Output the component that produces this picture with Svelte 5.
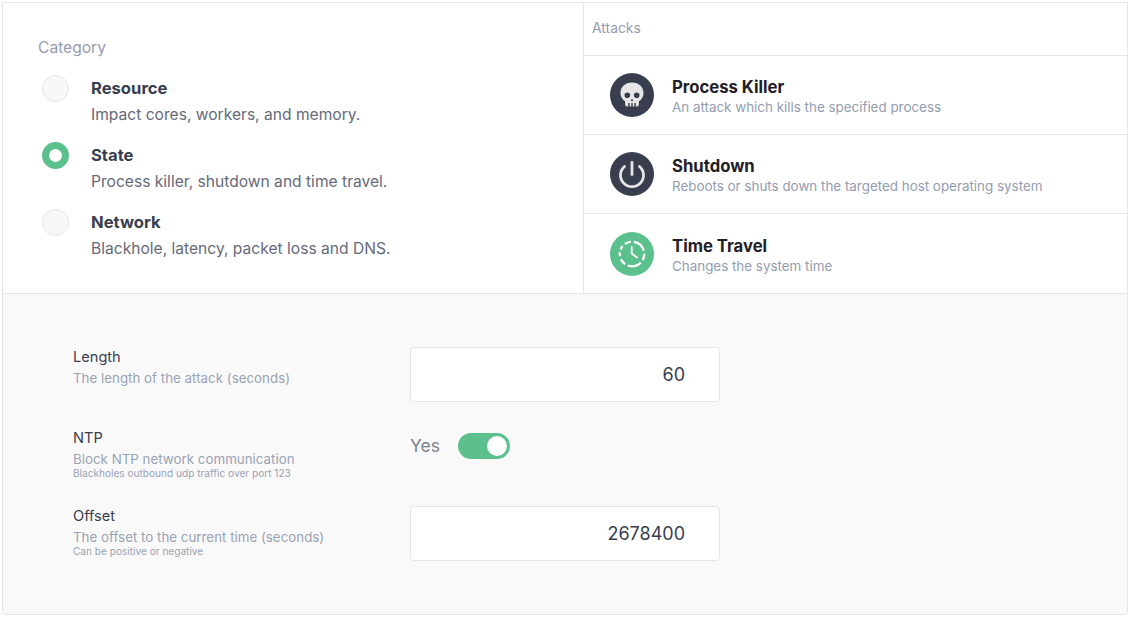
<script>
  const categories = [
    { name: 'Resource', desc: 'Impact cores, workers, and memory.', on: false },
    { name: 'State', desc: 'Process killer, shutdown and time travel.', on: true },
    { name: 'Network', desc: 'Blackhole, latency, packet loss and DNS.', on: false }
  ];
</script>

<div class="page">
  <div class="card">
    <div class="top">
      <section class="left">
        <div class="cat-title">Category</div>
        <div class="cats">
          {#each categories as c}
            <div class="cat">
              <span class="radio" class:on={c.on}></span>
              <div>
                <div class="cat-name">{c.name}</div>
                <div class="cat-desc">{c.desc}</div>
              </div>
            </div>
          {/each}
        </div>
      </section>
      <section class="right">
        <div class="attacks-head">Attacks</div>
        <div class="attack">
          <svg class="ico" viewBox="0 0 44 44">
            <circle cx="22" cy="22" r="22" fill="#393e4f" />
            <path fill="#e6e6e6" fill-rule="evenodd" d="M22 9.500c-6.800 0-11.500 4.500-11.500 10.500 0 3.600 1.700 6.500 4.600 8.200v3.400c0 1 .8 1.900 1.900 1.900h1.200v-3.500h1.400v3.500h1.700v-3.500h1.400v3.500h1.700v-3.500h1.400v3.500h1.200c1.100 0 1.900-.9 1.900-1.900v-3.400c2.900-1.700 4.600-4.600 4.600-8.200C33.500 14 28.800 9.500 22 9.500zM17.300 25a2.800 2.800 0 1 1 0-5.600 2.800 2.800 0 0 1 0 5.600zm9.400 0a2.800 2.800 0 1 1 0-5.600 2.800 2.800 0 0 1 0 5.600zM22 25.500l1.300 2.500h-2.600z" />
          </svg>
          <div class="a-text">
            <div class="a-name">Process Killer</div>
            <div class="a-desc">An attack which kills the specified process</div>
          </div>
        </div>
        <div class="attack">
          <svg class="ico" viewBox="0 0 44 44">
            <circle cx="22" cy="22" r="22" fill="#393e4f" />
            <path fill="none" stroke="#e6e6e6" stroke-width="2.800" stroke-linecap="round" d="M22 10.500v12M14.500 14.500a11.500 11.500 0 1 0 15 0" />
          </svg>
          <div class="a-text">
            <div class="a-name">Shutdown</div>
            <div class="a-desc">Reboots or shuts down the targeted host operating system</div>
          </div>
        </div>
        <div class="attack last">
          <svg class="ico" viewBox="0 0 44 44">
            <circle cx="22" cy="22" r="22" fill="#5cc08d" />
            <circle cx="22" cy="22" r="12.300" fill="none" stroke="#fff" stroke-width="2.200" stroke-dasharray="6.500 3 14 3 6.500 3 4 3 4 3" />
            <path fill="none" stroke="#fff" stroke-width="1.800" stroke-linecap="round" stroke-linejoin="round" d="M21.700 15v6.500l5.300 4" />
          </svg>
          <div class="a-text">
            <div class="a-name">Time Travel</div>
            <div class="a-desc">Changes the system time</div>
          </div>
        </div>
      </section>
    </div>

    <form class="form">
      <div class="row r1">
        <div class="label">
          <div class="l-name">Length</div>
          <div class="l-desc">The length of the attack (seconds)</div>
        </div>
        <div class="input">60</div>
      </div>
      <div class="row r2">
        <div class="label">
          <div class="l-name">NTP</div>
          <div class="l-desc">Block NTP network communication</div>
          <div class="l-help">Blackholes outbound udp traffic over port 123</div>
        </div>
        <div class="switch-wrap">
          <span class="yes">Yes</span>
          <span class="switch"><span class="knob"></span></span>
        </div>
      </div>
      <div class="row r3">
        <div class="label">
          <div class="l-name">Offset</div>
          <div class="l-desc">The offset to the current time (seconds)</div>
          <div class="l-help">Can be positive or negative</div>
        </div>
        <div class="input">2678400</div>
      </div>
    </form>
  </div>
</div>

<style>
  :global(body) {
    margin: 0;
    background: #fff;
    font-family: Inter, "Liberation Sans", sans-serif;
  }
  .page {
    width: 1131px;
    height: 619px;
    padding: 2px 3px 4px 2px;
    box-sizing: border-box;
  }
  .card {
    height: 613px;
    box-sizing: border-box;
    border: 1px solid #e6e6e6;
    border-radius: 0 0 4px 4px;
    display: flex;
    flex-direction: column;
  }
  .top {
    display: flex;
    height: 290px;
    border-bottom: 1px solid #e6e6e6;
    box-sizing: content-box;
  }
  .left {
    width: 580px;
    padding: 36px 0 0 35px;
    box-sizing: border-box;
  }
  .cat-title {
    font-size: 15.600px;
    line-height: 18px;
    color: #939cb0;
  }
  .cats {
    margin-top: 20px;
    display: flex;
    flex-direction: column;
    gap: 13px;
  }
  .cat {
    display: flex;
    height: 54px;
    padding-left: 4px;
  }
  .radio {
    width: 27px;
    height: 27px;
    box-sizing: border-box;
    margin-top: -2px;
    margin-right: 22px;
    border-radius: 50%;
    border: 1px solid #e6e6e6;
    background: #f8f8f8;
    flex: none;
  }
  .radio.on {
    border: 7px solid #5cc08d;
    background: #fff;
  }
  .cat-name {
    font-size: 16.600px;
    font-weight: 700;
    line-height: 22px;
    color: #393e4f;
  }
  .cat-desc {
    margin-top: 5px;
    font-size: 15.600px;
    line-height: 22px;
    color: #666a79;
  }
  .right {
    flex: 1;
    border-left: 1px solid #e6e6e6;
    display: flex;
    flex-direction: column;
  }
  .attacks-head {
    height: 53px;
    box-sizing: border-box;
    padding: 16px 0 0 8px;
    font-size: 13.900px;
    line-height: 18px;
    color: #939cb0;
    border-bottom: 1px solid #e6e6e6;
  }
  .attack {
    height: 79px;
    box-sizing: border-box;
    border-bottom: 1px solid #e6e6e6;
    display: flex;
    align-items: center;
    padding-left: 26px;
    gap: 18px;
  }
  .attack.last {
    border-bottom: 0;
  }
  .ico {
    width: 44px;
    height: 44px;
    flex: none;
  }
  .a-text {
    padding-top: 2px;
  }
  .a-name {
    font-size: 16.700px;
    font-weight: 700;
    line-height: 22px;
    color: #1f2028;
  }
  .a-desc {
    font-size: 13.400px;
    line-height: 18px;
    color: #939cb0;
  }
  .form {
    flex: 1;
    background: #f9f9f9;
    border-radius: 0 0 4px 4px;
    padding: 53px 0 0 70px;
  }
  .row {
    display: flex;
    align-items: flex-start;
  }
  .r1 { height: 81px; }
  .r2 { height: 78px; }
  .label {
    width: 337px;
    flex: none;
  }
  .l-name {
    font-size: 14.600px;
    line-height: 20px;
    color: #393e4f;
  }
  .l-desc {
    margin-top: 2px;
    font-size: 13.350px;
    line-height: 18px;
    color: #9aa3b5;
  }
  .l-help {
    margin-top: -1px;
    font-size: 10.100px;
    line-height: 12px;
    color: #9aa3b5;
  }
  .input {
    width: 310px;
    height: 55px;
    box-sizing: border-box;
    border: 1px solid #e6e6e6;
    border-radius: 4px;
    background: #fff;
    text-align: right;
    padding-right: 34px;
    font-size: 18px;
    line-height: 54px;
    color: #393e4f;
  }
  .switch-wrap {
    display: flex;
    align-items: center;
    gap: 18px;
    height: 26px;
    margin-top: 5px;
  }
  .yes {
    margin-bottom: 2px;
    font-size: 17.500px;
    color: #7b8294;
  }
  .switch {
    width: 52px;
    height: 26px;
    border-radius: 13px;
    background: #5cc08d;
    position: relative;
  }
  .knob {
    position: absolute;
    right: 3px;
    top: 3px;
    width: 20px;
    height: 20px;
    border-radius: 50%;
    background: #fff;
  }
</style>
